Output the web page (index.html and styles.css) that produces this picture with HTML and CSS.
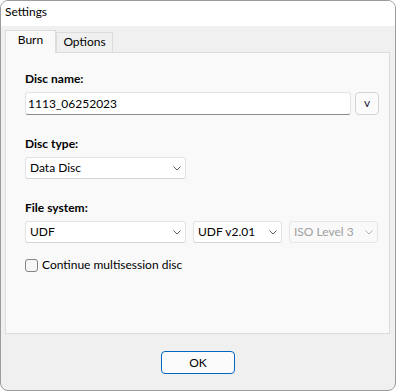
FILE: index.html
```html
<!DOCTYPE html>
<html lang="en">
<head>
  <meta charset="UTF-8" />
  <title>Settings</title>
  <link rel="stylesheet" href="styles.css">
</head>
<body>
  <div class="window">
    <div class="titlebar">Settings</div>

    <div class="client">
      <div class="tabs">
        <div class="tab active">Burn</div>
        <div class="tab">Options</div>
      </div>

      <div class="panel">
        <div class="field">
          <div class="label">Disc name:</div>
          <div class="row">
            <div class="textbox">1113_06252023</div>
            <div class="small-btn">v</div>
          </div>
        </div>

        <div class="field">
          <div class="label">Disc type:</div>
          <div class="row">
            <div class="select wide">
              <span>Data Disc</span>
              <svg width="8" height="5" viewBox="0 0 8 5"><polyline points="0.5,0.5 4,4 7.5,0.5" /></svg>
            </div>
          </div>
        </div>

        <div class="field">
          <div class="label">File system:</div>
          <div class="row">
            <div class="select wide">
              <span>UDF</span>
              <svg width="8" height="5" viewBox="0 0 8 5"><polyline points="0.5,0.5 4,4 7.5,0.5" /></svg>
            </div>
            <div class="select narrow">
              <span>UDF v2.01</span>
              <svg width="8" height="5" viewBox="0 0 8 5"><polyline points="0.5,0.5 4,4 7.5,0.5" /></svg>
            </div>
            <div class="select narrow disabled">
              <span>ISO Level 3</span>
              <svg width="8" height="5" viewBox="0 0 8 5"><polyline points="0.5,0.5 4,4 7.5,0.5" /></svg>
            </div>
          </div>
        </div>

        <label class="check-row">
          <span class="checkbox"></span>
          <span>Continue multisession disc</span>
        </label>
      </div>

      <div class="buttons">
        <div class="btn-ok">OK</div>
      </div>
    </div>
  </div>
</body>
</html>
```

FILE: styles.css
```css
* {
  margin: 0;
  padding: 0;
  box-sizing: border-box;
}

body {
  font-family: 'Lato', 'Noto Sans', sans-serif;
  font-size: 12px;
  line-height: 16px;
  color: #000;
  background: #fff;
}

.window {
  width: 396px;
  height: 391px;
  border: 1px solid #9c9c9c;
  border-radius: 8px;
  overflow: hidden;
  background-color: #f0f0f0;
}

.titlebar {
  height: 25px;
  padding: 3px 0 0 4px;
  background-color: #fff;
}

.client {
  padding: 4px 5px 0 4px;
}

/* tabs */
.tabs {
  display: flex;
  align-items: flex-end;
  height: 23px;
  margin-bottom: -1px;
}

.tab {
  height: 20px;
  margin-bottom: 1px;
  padding: 1px 0 0;
  border: 1px solid #dcdcdc;
  border-bottom: none;
  text-align: center;
  width: 57px;
  background-color: #f0f0f0;
}

.tab.active {
  width: 51px;
  height: 23px;
  margin-bottom: 0;
  background-color: #f9f9f9;
  position: relative;
  z-index: 1;
}

.panel {
  height: 282px;
  border: 1px solid #dcdcdc;
  background-color: #f9f9f9;
  padding: 18px 0 0 19px;
}

.field {
  margin-bottom: 21px;
}

.label {
  font-weight: 700;
  margin-bottom: 5px;
}

.row {
  display: flex;
  gap: 7px;
}

.textbox {
  width: 326px;
  height: 23px;
  padding: 3px 0 0 2px;
  background-color: #fff;
  border: 1px solid #e3e3e3;
  border-bottom-color: #8a8a8a;
  border-radius: 3px;
}

.small-btn {
  width: 24px;
  height: 23px;
  margin-left: -3px;
  padding-top: 2px;
  text-align: center;
  background-color: #fbfbfb;
  border: 1px solid #d4d4d4;
  border-radius: 4px;
  color: #1c1c3a;
}

.select {
  display: flex;
  align-items: center;
  justify-content: space-between;
  height: 22px;
  padding: 0 4px 0 4px;
  background-color: #fff;
  border: 1px solid #e3e3e3;
  border-bottom-color: #d2d2d2;
  border-radius: 3px;
}

.select svg polyline {
  fill: none;
  stroke: #606060;
  stroke-width: 1;
}

.select.wide {
  width: 161px;
}

.select.narrow {
  width: 89px;
}

.select.disabled {
  background-color: #f9f9f9;
  border-color: #e6e6e6;
  color: #a0a0a0;
}

.select.disabled svg polyline {
  stroke: #b4b4b4;
}

.check-row {
  display: flex;
  align-items: center;
  gap: 4px;
  margin-top: -7px;
  height: 16px;
}

.checkbox {
  width: 13px;
  height: 13px;
  border: 1px solid #858585;
  border-radius: 3px;
  background-color: #f6f6f6;
}

.buttons {
  display: flex;
  justify-content: center;
  padding-top: 17px;
  padding-left: 1px;
}

.btn-ok {
  width: 74px;
  height: 23px;
  padding-top: 3px;
  text-align: center;
  background-color: #fbfbfb;
  border: 1px solid #0067c0;
  border-radius: 4px;
}
```
